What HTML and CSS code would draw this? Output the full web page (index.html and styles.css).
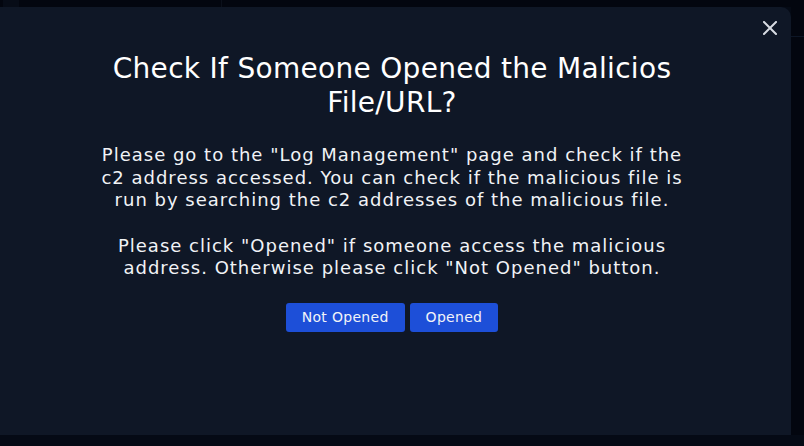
FILE: index.html
```html
<!DOCTYPE html>
<html lang="en">
<head>
<meta charset="utf-8">
<title>Check If Someone Opened</title>
<link rel="stylesheet" href="styles.css">
</head>
<body>
<div class="page">
  <div class="backdrop-top">
    <span class="bg-strip"></span>
    <span class="bg-line"></span>
  </div>
  <div class="modal-row">
    <div class="modal">
      <button class="close" aria-label="Close">
        <svg width="14" height="14" viewBox="0 0 14 14"><path d="M1 1L13 13M13 1L1 13" stroke="#d7dbe2" stroke-width="2" stroke-linecap="square"/></svg>
      </button>
      <h1 class="title">Check If Someone Opened the Malicios File/URL?</h1>
      <p class="text">Please go to the "Log Management" page and check if the c2 address accessed. You can check if the malicious file is run by searching the c2 addresses of the malicious file.</p>
      <p class="text text-2">Please click "Opened" if someone access the malicious address. Otherwise please click "Not Opened" button.</p>
      <div class="actions">
        <button class="btn">Not Opened</button>
        <button class="btn">Opened</button>
      </div>
    </div>
    <div class="side"><span class="side-line"></span></div>
  </div>
</div>
</body>
</html>
```

FILE: styles.css
```css
* { box-sizing: border-box; }
html, body { margin: 0; padding: 0; }
body {
  width: 804px;
  height: 446px;
  overflow: hidden;
  background: #050a15;
  font-family: "DejaVu Sans", "Open Sans", sans-serif;
}
.page { display: flex; flex-direction: column; }
.backdrop-top {
  height: 7px;
  background: #03060f;
  display: flex;
}
.bg-strip { width: 16px; margin-left: 3px; background: #070c17; }
.bg-line { width: 1px; margin-left: 202px; background: #0b101b; }
.modal-row { display: flex; height: 428px; }
.modal {
  position: relative;
  width: 791px;
  background: #0f1726;
  border-top-right-radius: 10px;
  display: flex;
  flex-direction: column;
  align-items: center;
  padding: 45px 7px 0 0;
}
.side { flex: 1; background: #03060f; padding-top: 29px; }
.side-line { display: block; height: 1px; background: #0d1626; }
.close {
  position: absolute;
  top: 14px;
  right: 14px;
  width: 14px;
  height: 14px;
  padding: 0;
  border: 0;
  background: none;
  display: flex;
}
.title {
  margin: 0;
  width: 600px;
  color: #ffffff;
  font-size: 28px;
  font-weight: 400;
  letter-spacing: 0.3px;
  line-height: 34px;
  text-align: center;
}
.text {
  margin: 24px 0 0;
  width: 600px;
  color: #f1f3f6;
  font-size: 18px;
  letter-spacing: 1px;
  line-height: 22.6px;
  text-align: center;
}
.text-2 { margin-top: 23px; }
.actions {
  display: flex;
  gap: 5px;
  margin-top: 23px;
}
.btn {
  height: 29px;
  padding: 0 16px;
  border: 0;
  border-radius: 3px;
  background: #1d4fd8;
  color: #f1f3f8;
  font-family: inherit;
  font-size: 14px;
  letter-spacing: 0.3px;
}
```
